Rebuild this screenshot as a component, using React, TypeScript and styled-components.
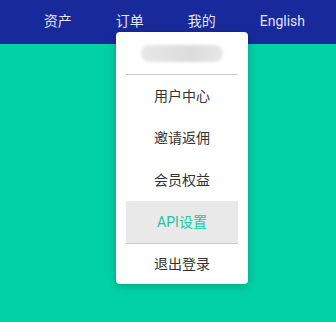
import styled, { createGlobalStyle } from "styled-components";

const GlobalStyle = createGlobalStyle`
  html, body {
    margin: 0;
    padding: 0;
  }
  body {
    font-family: Roboto, "Noto Sans CJK SC", sans-serif;
  }
`;

const navItems = ["资产", "订单", "我的", "English"];
const menuItems = ["用户中心", "邀请返佣", "会员权益", "API设置"];

const App = () => {
  return (
    <Page>
      <GlobalStyle />
      <Header>
        {navItems.map((item) => (
          <NavItem key={item}>{item}</NavItem>
        ))}
      </Header>
      <Dropdown>
        <UserRow>
          <BlurredName />
        </UserRow>
        <Divider />
        {menuItems.map((item) => (
          <MenuItem key={item} $active={item === "API设置"}>
            {item}
          </MenuItem>
        ))}
        <Divider />
        <LogoutItem>退出登录</LogoutItem>
      </Dropdown>
    </Page>
  );
};

export default App;

const Page = styled.div`
  position: relative;
  width: 336px;
  height: 322px;
  background: #02d1a5;
  overflow: hidden;
`;

const Header = styled.div`
  display: flex;
  justify-content: flex-end;
  align-items: center;
  height: 44px;
  padding: 0 9px 3px 0;
  box-sizing: border-box;
  background: #18299b;
`;

const NavItem = styled.div`
  padding: 0 22px;
  font-size: 14px;
  line-height: 40px;
  color: rgba(255, 255, 255, 0.9);
`;

const Dropdown = styled.div`
  position: absolute;
  left: 116px;
  top: 32px;
  width: 132px;
  padding: 0 10px;
  box-sizing: border-box;
  background: #fff;
  border-radius: 4px;
  box-shadow: 0 2px 8px rgba(0, 0, 0, 0.22);
`;

const UserRow = styled.div`
  display: flex;
  justify-content: center;
  align-items: center;
  height: 42px;
`;

const BlurredName = styled.div`
  width: 82px;
  height: 17px;
  border-radius: 9px;
  background: linear-gradient(90deg, #e8e8e8, #dcdcdc 60%, #e6e6e6);
  filter: blur(1.5px);
`;

const Divider = styled.div`
  height: 1px;
  background: #cccccc;
`;

const MenuItem = styled.div<{ $active?: boolean }>`
  height: 42px;
  line-height: 42px;
  text-align: center;
  font-size: 14px;
  color: ${(p) => (p.$active ? "#14c99d" : "#333333")};
  background: ${(p) => (p.$active ? "#e9e9e9" : "transparent")};
`;

const LogoutItem = styled(MenuItem)`
  height: 40px;
  line-height: 40px;
`;
